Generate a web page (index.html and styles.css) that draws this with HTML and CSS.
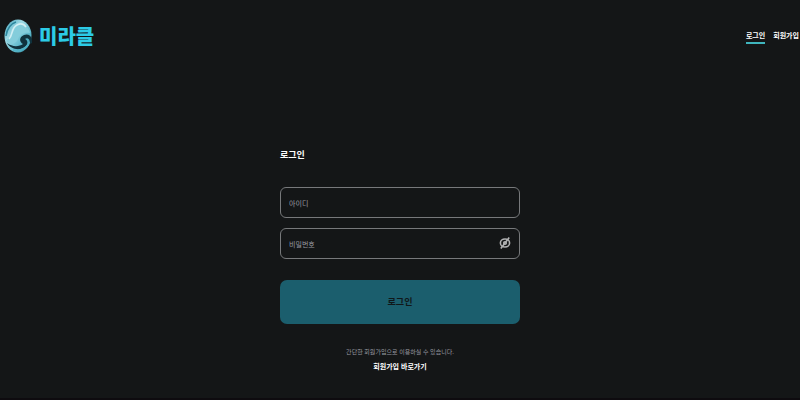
FILE: index.html
```html
<!DOCTYPE html>
<html lang="ko">
<head>
  <meta charset="UTF-8" />
  <meta name="viewport" content="width=device-width, initial-scale=1.0"/>
  <title>미라클 - 로그인</title>
  <link rel="stylesheet" href="styles.css">
</head>
<body>

<header class="header">
  <a href="#" class="logo">
    <svg class="logo-mark" viewBox="0 0 28 34" aria-hidden="true">
      <defs>
        <linearGradient id="wave" x1="0" y1="0" x2="1" y2="1">
          <stop offset="0" stop-color="#3f9fb7"/>
          <stop offset="0.35" stop-color="#9fdbe6"/>
          <stop offset="0.7" stop-color="#58b4c8"/>
          <stop offset="1" stop-color="#2c8ba3"/>
        </linearGradient>
      </defs>
      <path d="M14 0.5C21.5 0.5 27.5 8 27.5 16C27.5 26 21 33.5 14 33.5C6 33.5 0.5 26 0.5 17C0.5 8 6.5 0.5 14 0.5Z" fill="url(#wave)"/>
      <path d="M28 24C29 17 24 14 20 16C15 18 15 23 19 25C15 28 8 28 3 24C7 31 17 32 22 27C24 25 24 21 21 20C24 18 26 20 26 25Z" fill="#10323d"/>
      <path d="M2 22C7 27 12 25 14 20C16 15 21 13 26 14C24 6 17 3 12 6C6 10 7 18 2 22Z" fill="#84cddb"/>
      <path d="M5 20C9 16 7 9 13 6C17 4 20 5 22 8" fill="none" stroke="#d2eff4" stroke-width="1.6"/>
      <path d="M2 17C3 10 6 5 12 3" fill="none" stroke="#2c879e" stroke-width="1.5"/>
      <path d="M9 31C16 33 24 29 25 23" fill="none" stroke="#4fb0c4" stroke-width="1.8"/>
    </svg>
    <span class="logo-text">미라클</span>
  </a>
  <nav class="nav">
    <a href="#" class="active">로그인</a>
    <a href="#">회원가입</a>
  </nav>
</header>

<main class="login">
  <h1>로그인</h1>
  <form>
    <div class="field">
      <input type="text" id="user-id" placeholder="아이디" aria-label="아이디">
    </div>
    <div class="field">
      <input type="password" id="user-pw" placeholder="비밀번호" aria-label="비밀번호">
      <button type="button" class="toggle-pw" aria-label="비밀번호 표시">
        <svg viewBox="0 0 12 12" aria-hidden="true">
          <ellipse cx="6" cy="6" rx="4.6" ry="4"/>
          <circle cx="6" cy="6" r="1.3"/>
          <path d="M1.8 11.4L10.2 0.6"/>
        </svg>
      </button>
    </div>
    <button type="submit" class="submit">로그인</button>
  </form>
  <p class="hint">간단한 회원가입으로 이용하실 수 있습니다.</p>
  <a href="#" class="join">회원가입 바로가기</a>
</main>

</body>
</html>
```
FILE: styles.css
```css
* {
  box-sizing: border-box;
}

body {
  display: flex;
  flex-direction: column;
  min-height: 100vh;
  margin: 0;
  background-color: #141617;
  border-bottom: 2px solid #0e0b0f;
  color: #fff;
  font-family: "Noto Sans CJK KR", "Noto Sans", sans-serif;
}

a {
  color: inherit;
  text-decoration: none;
}

.header {
  display: flex;
  align-items: center;
  justify-content: space-between;
  height: 72px;
  padding: 0 1px 0 4px;
}

.logo {
  display: flex;
  align-items: center;
  gap: 7px;
}

.logo-mark {
  width: 28px;
  height: 34px;
}

.logo-text {
  color: #2ccbe6;
  font-size: 20px;
  font-weight: 900;
  line-height: 32px;
}

.nav {
  display: flex;
  gap: 8px;
  font-size: 7px;
  font-weight: 700;
  line-height: 14px;
}

.nav a {
  border-bottom: 2px solid transparent;
}

.nav a.active {
  border-bottom-color: #3fb5bd;
}

.login {
  width: 30%;
  min-width: 240px;
  margin: 0 auto;
  padding-top: 75px;
  text-align: center;
}

h1 {
  margin: 0 0 24px;
  font-size: 9px;
  font-weight: 700;
  line-height: 16px;
  text-align: left;
}

.field {
  position: relative;
  margin-bottom: 10px;
}

.field input {
  display: block;
  width: 100%;
  height: 31px;
  padding: 0 28px 0 8px;
  background: none;
  border: 1px solid #77797b;
  border-radius: 6px;
  color: #fff;
  font-family: inherit;
  font-size: 7px;
}

.field input::placeholder {
  color: #9a9ba1;
  opacity: 1;
}

.toggle-pw {
  position: absolute;
  top: 9px;
  right: 9px;
  width: 12px;
  height: 12px;
  padding: 0;
  background: none;
  border: none;
  cursor: pointer;
}

.toggle-pw svg {
  display: block;
  fill: none;
  stroke: #b0b1b2;
  stroke-width: 1.6;
}

.submit {
  display: block;
  width: 100%;
  height: 44px;
  margin-top: 21px;
  padding: 0 0 2px;
  background-color: #1b5e6d;
  border: none;
  border-radius: 7px;
  color: #101719;
  font-family: inherit;
  font-size: 9px;
  font-weight: 700;
  cursor: pointer;
}

.hint {
  margin: 20px 0 0;
  color: #9a9ba1;
  font-size: 6px;
  line-height: 15px;
}

.join {
  display: block;
  font-size: 7px;
  font-weight: 700;
  line-height: 15px;
}
```
